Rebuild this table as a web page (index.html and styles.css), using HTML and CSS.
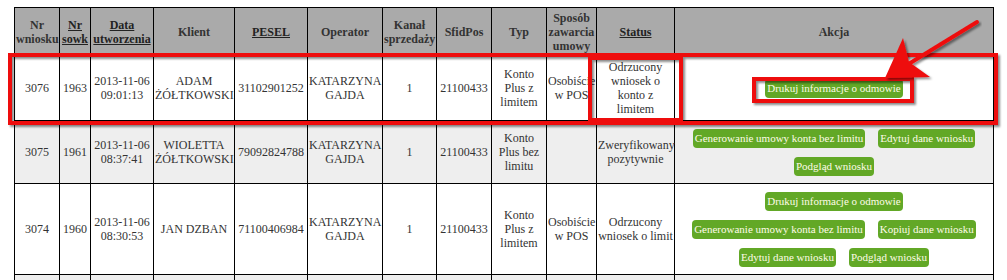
FILE: index.html
```html
<!DOCTYPE html>
<html lang="pl">
<head>
<meta charset="utf-8">
<title>Wnioski</title>
<link rel="stylesheet" href="styles.css">
</head>
<body>
<div class="page">
  <table class="grid">
    <colgroup>
      <col class="c1"><col class="c2"><col class="c3"><col class="c4"><col class="c5"><col class="c6">
      <col class="c7"><col class="c8"><col class="c9"><col class="c10"><col class="c11"><col class="c12">
    </colgroup>
    <thead>
      <tr class="head">
        <th>Nr wniosku</th>
        <th><a href="#">Nr sowk</a></th>
        <th><a href="#">Data utworzenia</a></th>
        <th>Klient</th>
        <th><a href="#">PESEL</a></th>
        <th>Operator</th>
        <th>Kanał sprzedaży</th>
        <th>SfidPos</th>
        <th>Typ</th>
        <th>Sposób zawarcia umowy</th>
        <th><a href="#">Status</a></th>
        <th>Akcja</th>
      </tr>
    </thead>
    <tbody>
      <tr class="odd r1">
        <td>3076</td>
        <td>1963</td>
        <td>2013-11-06 09:01:13</td>
        <td>ADAM ŻÓŁTKOWSKI</td>
        <td>31102901252</td>
        <td>KATARZYNA GAJDA</td>
        <td>1</td>
        <td>21100433</td>
        <td class="typ">Konto Plus z limitem</td>
        <td>Osobiście w POS</td>
        <td>Odrzucony wniosek o konto z limitem</td>
        <td><div class="actions"><a class="btn" href="#">Drukuj informacje o odmowie</a></div></td>
      </tr>
      <tr class="even r2">
        <td>3075</td>
        <td>1961</td>
        <td>2013-11-06 08:37:41</td>
        <td>WIOLETTA ŻÓŁTKOWSKI</td>
        <td>79092824788</td>
        <td>KATARZYNA GAJDA</td>
        <td>1</td>
        <td>21100433</td>
        <td class="typ">Konto Plus bez limitu</td>
        <td></td>
        <td>Zweryfikowany pozytywnie</td>
        <td><div class="actions">
          <a class="btn" href="#">Generowanie umowy konta bez limitu</a>
          <a class="btn" href="#">Edytuj dane wniosku</a>
          <a class="btn" href="#">Podgląd wniosku</a>
        </div></td>
      </tr>
      <tr class="odd r3">
        <td>3074</td>
        <td>1960</td>
        <td>2013-11-06 08:30:53</td>
        <td>JAN DZBAN</td>
        <td>71100406984</td>
        <td>KATARZYNA GAJDA</td>
        <td>1</td>
        <td>21100433</td>
        <td class="typ">Konto Plus z limitem</td>
        <td>Osobiście w POS</td>
        <td>Odrzucony wniosek o limit</td>
        <td><div class="actions">
          <a class="btn" href="#">Drukuj informacje o odmowie</a>
          <a class="btn" href="#">Generowanie umowy konta bez limitu</a>
          <a class="btn" href="#">Kopiuj dane wniosku</a>
          <a class="btn" href="#">Edytuj dane wniosku</a>
          <a class="btn" href="#">Podgląd wniosku</a>
        </div></td>
      </tr>
      <tr class="even r4">
        <td></td><td></td><td></td><td></td><td></td><td></td>
        <td></td><td></td><td></td><td></td><td></td><td></td>
      </tr>
    </tbody>
  </table>

  <svg class="annot" width="1007" height="280" viewBox="0 0 1007 280" aria-hidden="true">
    <defs>
      <filter id="sh" x="-5%" y="-20%" width="110%" height="140%">
        <feDropShadow dx="2" dy="2" stdDeviation="1.2" flood-color="#000" flood-opacity="0.45"/>
      </filter>
    </defs>
    <g filter="url(#sh)" fill="none" stroke="#ee1111" stroke-width="4">
      <rect x="10" y="55" width="986" height="68"/>
      <rect x="590" y="58" width="91" height="62"/>
      <rect x="754" y="79" width="158" height="22"/>
    </g>
    <g filter="url(#sh)">
      <line x1="977" y1="22" x2="902" y2="68" stroke="#ee1111" stroke-width="4" stroke-linecap="round"/>
      <polygon points="885,78 903,38 909,62 930,77" fill="#ee1111"/>
    </g>
  </svg>
</div>
</body>
</html>
```
FILE: styles.css
```css
html, body {
  margin: 0;
  padding: 0;
  background: #fff;
}

.page {
  position: relative;
  padding: 7px 0 0 14px;
  width: 1007px;
  height: 280px;
  overflow: hidden;
  box-sizing: border-box;
}

.grid {
  width: 979px;
  table-layout: fixed;
  border-collapse: collapse;
  font-family: "Liberation Serif", "Times New Roman", serif;
  font-size: 12px;
  color: #333;
}

.c1 { width: 45px; }
.c2 { width: 31px; }
.c3 { width: 63px; }
.c4 { width: 81px; }
.c5 { width: 73px; }
.c6 { width: 75px; }
.c7 { width: 54px; }
.c8 { width: 55px; }
.c9 { width: 55px; }
.c10 { width: 50px; }
.c11 { width: 78px; }
.c12 { width: 319px; }

.grid th,
.grid td {
  border: 1px solid #000;
  padding: 0 1px;
  text-align: center;
  vertical-align: middle;
}

.grid th {
  background: #aaaaaa;
  font-weight: bold;
  color: #333;
  line-height: 14px;
}

.grid th a {
  color: #222;
  text-decoration: underline;
}

.grid td {
  line-height: 14px;
}

.grid td.typ {
  padding: 0 3px;
}

.head { height: 48px; }
.r1 { height: 65px; }
.r2 { height: 63px; }
.r3 { height: 91px; }
.r4 { height: 91px; }

.odd { background: #fff; }
.even { background: #eeeeee; }

.actions {
  display: flex;
  flex-wrap: wrap;
  justify-content: center;
  gap: 9px 13px;
  padding: 0 2px;
}

.btn {
  display: block;
  background: #62a826;
  color: #fffce8;
  font-size: 11px;
  line-height: 15px;
  padding: 2px 2px;
  border-radius: 4px;
  text-decoration: none;
  white-space: nowrap;
}

.annot {
  position: absolute;
  left: 0;
  top: 0;
  pointer-events: none;
}
```
